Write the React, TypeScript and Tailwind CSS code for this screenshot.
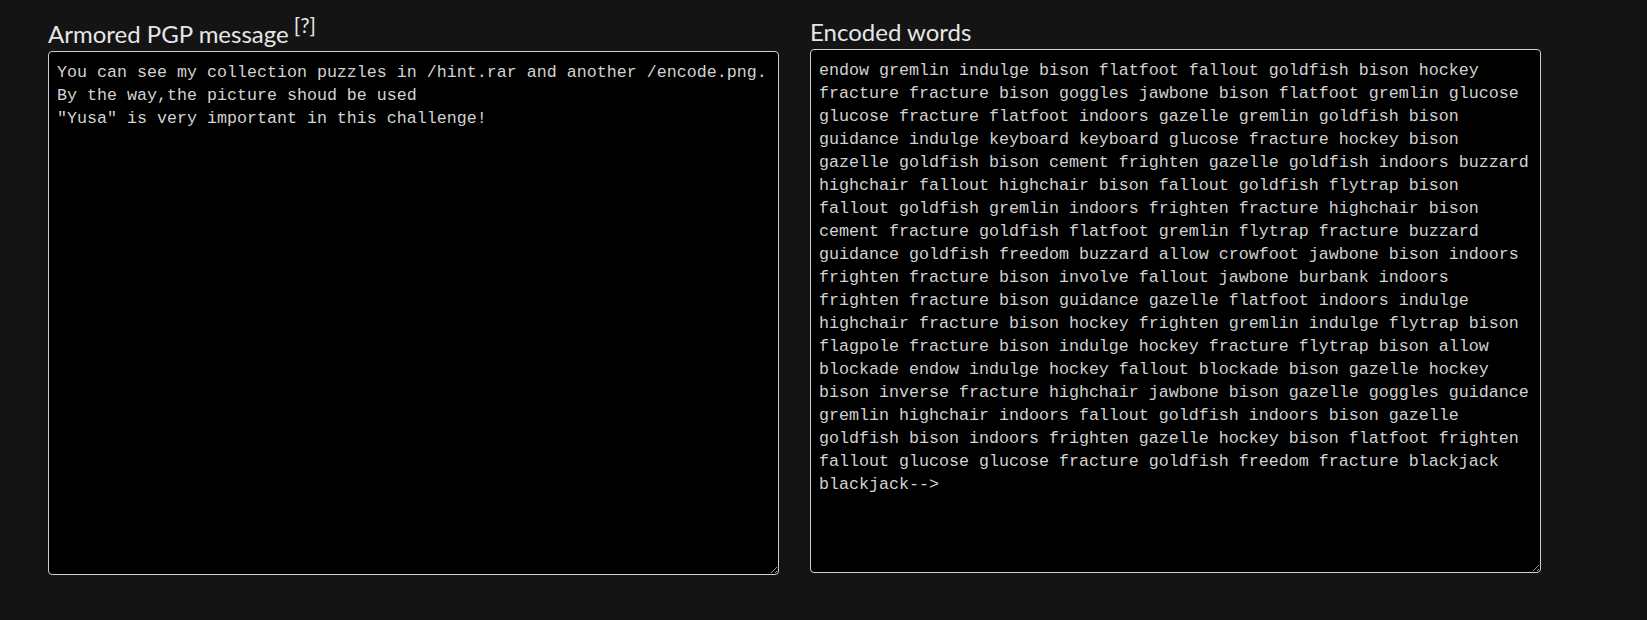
import React from "react";

const pgpText = `You can see my collection puzzles in /hint.rar and another /encode.png.
By the way,the picture shoud be used
"Yusa" is very important in this challenge!`;

const encodedText =
  "endow gremlin indulge bison flatfoot fallout goldfish bison hockey fracture fracture bison goggles jawbone bison flatfoot gremlin glucose glucose fracture flatfoot indoors gazelle gremlin goldfish bison guidance indulge keyboard keyboard glucose fracture hockey bison gazelle goldfish bison cement frighten gazelle goldfish indoors buzzard highchair fallout highchair bison fallout goldfish flytrap bison fallout goldfish gremlin indoors frighten fracture highchair bison cement fracture goldfish flatfoot gremlin flytrap fracture buzzard guidance goldfish freedom buzzard allow crowfoot jawbone bison indoors frighten fracture bison involve fallout jawbone burbank indoors frighten fracture bison guidance gazelle flatfoot indoors indulge highchair fracture bison hockey frighten gremlin indulge flytrap bison flagpole fracture bison indulge hockey fracture flytrap bison allow blockade endow indulge hockey fallout blockade bison gazelle hockey bison inverse fracture highchair jawbone bison gazelle goggles guidance gremlin highchair indoors fallout goldfish indoors bison gazelle goldfish bison indoors frighten gazelle hockey bison flatfoot frighten fallout glucose glucose fracture goldfish freedom fracture blackjack blackjack-->";

function Panel({ title, hint, value }: { title: string; hint?: boolean; value: string }) {
  return (
    <div className={`flex flex-col w-[731px] ${hint ? "pt-[2px]" : ""}`}>
      <h3 className="text-[24px] leading-[28px] text-[#e6e6e6] font-['Lato',sans-serif] mb-[3px]">
        {title}
        {hint && (
          <sup className="relative -top-[10px] align-baseline text-[21px] leading-[0] ml-[5px] text-[#e6e6e6]">[?]</sup>
        )}
      </h3>
      <textarea
        readOnly
        value={value}
        spellCheck={false}
        className="h-[524px] w-full resize bg-black text-[#d2d2d2] border border-[#cfcfcf] rounded-[4px] px-2 pt-[9px] pb-2 text-[16.67px] leading-[23px] font-['Liberation_Mono',monospace] outline-none"
      />
    </div>
  );
}

export default function App() {
  return (
    <div className="min-h-screen bg-[#141414] pt-[18px] pl-[48px] flex items-start gap-[31px]">
      <Panel title="Armored PGP message" hint value={pgpText} />
      <Panel title="Encoded words" value={encodedText} />
    </div>
  );
}
